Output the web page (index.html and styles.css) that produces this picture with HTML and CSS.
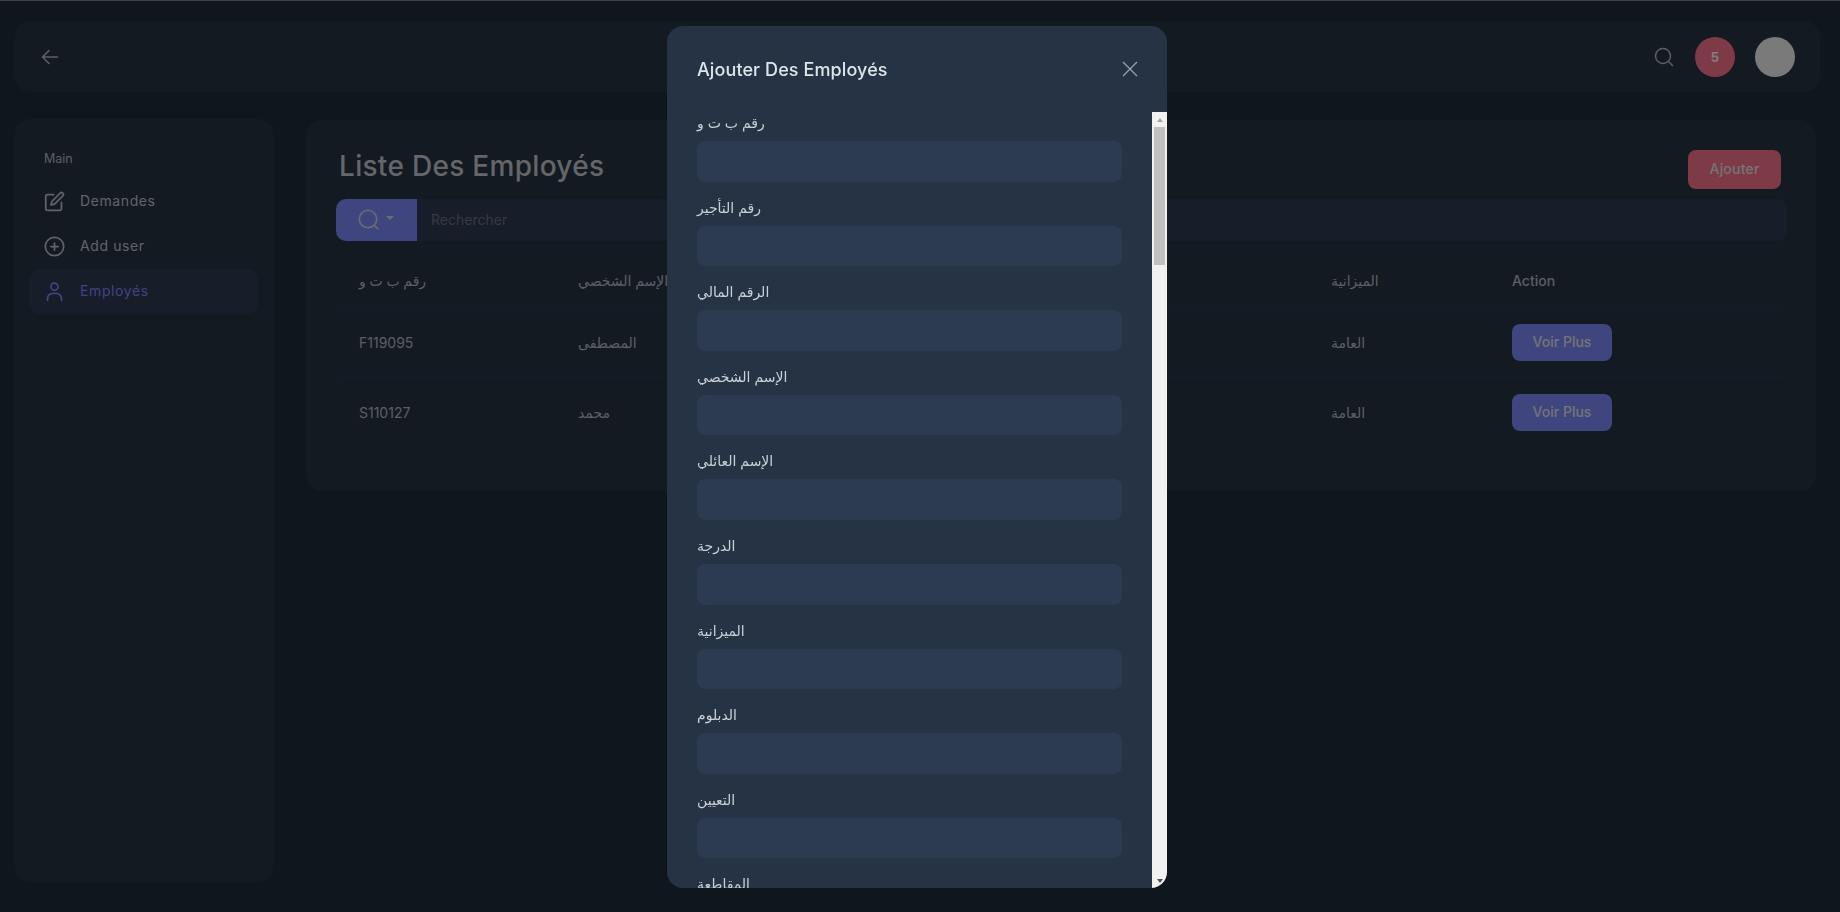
FILE: index.html
```html
<!DOCTYPE html>
<html lang="fr">
  <head>
    <meta charset="UTF-8" />
    <meta name="viewport" content="width=device-width, initial-scale=1.0" />
    <title>Liste Des Employés</title>
    <link rel="stylesheet" href="styles.css">
  </head>

  <body>
    <div class="page">
      <header class="topbar">
        <a class="back" href="#">
          <svg width="18" height="16" viewBox="0 0 18 16" fill="none" stroke="currentColor" stroke-width="1.6" stroke-linecap="round" stroke-linejoin="round"><path d="M16.500 8H1.500M8 1.500 1.500 8 8 14.500"/></svg>
        </a>
        <div class="topbar-right">
          <svg class="top-search" width="20" height="20" viewBox="0 0 20 20" fill="none" stroke="currentColor" stroke-width="1.5" stroke-linecap="round"><circle cx="9" cy="9" r="7.500"/><path d="M15 15l3.500 3.500"/></svg>
          <span class="badge">5</span>
          <span class="avatar"></span>
        </div>
      </header>

      <div class="content">
        <aside class="sidebar">
          <div class="side-title">Main</div>
          <a class="side-item" href="#">
            <svg width="21" height="21" viewBox="0 0 24 24" fill="none" stroke="currentColor" stroke-width="2" stroke-linecap="round" stroke-linejoin="round"><path d="M11 4H4a2 2 0 0 0-2 2v14a2 2 0 0 0 2 2h14a2 2 0 0 0 2-2v-7"/><path d="M18.500 2.500a2.121 2.121 0 0 1 3 3L12 15l-4 1 1-4 9.500-9.500z"/></svg>
            <span>Demandes</span>
          </a>
          <a class="side-item" href="#">
            <svg width="21" height="21" viewBox="0 0 24 24" fill="none" stroke="currentColor" stroke-width="2" stroke-linecap="round" stroke-linejoin="round"><circle cx="12" cy="12" r="10.500"/><path d="M12 8v8M8 12h8"/></svg>
            <span>Add user</span>
          </a>
          <a class="side-item active" href="#">
            <svg width="21" height="21" viewBox="0 0 24 24" fill="none" stroke="currentColor" stroke-width="2" stroke-linecap="round" stroke-linejoin="round"><circle cx="12" cy="6.500" r="4"/><path d="M4 22v-2a6 6 0 0 1 6-6h4a6 6 0 0 1 6 6v2"/></svg>
            <span>Employés</span>
          </a>
        </aside>

        <main class="panel">
          <div class="panel-head">
            <h1>Liste Des Employés</h1>
            <button class="btn btn-red" type="button">Ajouter</button>
          </div>

          <div class="search-row">
            <button class="search-btn" type="button">
              <svg width="24" height="24" viewBox="0 0 24 24" fill="none" stroke="currentColor" stroke-width="1.6" stroke-linecap="round"><circle cx="11" cy="11" r="8.700"/><path d="M17.500 17.500l3.500 3.500"/></svg>
              <span class="caret"></span>
            </button>
            <input type="text" placeholder="Rechercher" />
          </div>

          <table class="employees">
            <thead>
              <tr>
                <th>رقم ب ت و</th>
                <th>الإسم الشخصي</th>
                <th>الإسم العائلي</th>
                <th>الدرجة</th>
                <th>الميزانية</th>
                <th>Action</th>
              </tr>
            </thead>
            <tbody>
              <tr>
                <td>F119095</td>
                <td>المصطفى</td>
                <td></td>
                <td></td>
                <td>العامة</td>
                <td><button class="btn btn-blue" type="button">Voir Plus</button></td>
              </tr>
              <tr>
                <td>S110127</td>
                <td>محمد</td>
                <td></td>
                <td></td>
                <td>العامة</td>
                <td><button class="btn btn-blue" type="button">Voir Plus</button></td>
              </tr>
            </tbody>
          </table>
        </main>
      </div>
    </div>

    <div class="backdrop"></div>

    <div class="modal">
      <div class="modal-head">
        <h2>Ajouter Des Employés</h2>
        <svg class="close" width="16" height="16" viewBox="0 0 16 16" fill="none" stroke="currentColor" stroke-width="1.3"><path d="M1 1l14 14M15 1 1 15"/></svg>
      </div>
      <div class="modal-body">
        <form class="modal-form">
          <label>رقم ب ت و</label>
          <input type="text" />
          <label>رقم التأجير</label>
          <input type="text" />
          <label>الرقم المالي</label>
          <input type="text" />
          <label>الإسم الشخصي</label>
          <input type="text" />
          <label>الإسم العائلي</label>
          <input type="text" />
          <label>الدرجة</label>
          <input type="text" />
          <label>الميزانية</label>
          <input type="text" />
          <label>الدبلوم</label>
          <input type="text" />
          <label>التعيين</label>
          <input type="text" />
          <label>المقاطعة</label>
          <input type="text" />
        </form>
        <!-- the browser hides real scrollbars here, so this one is drawn -->
        <div class="scrollbar">
          <div class="scroll-btn"><span class="arrow-up"></span></div>
          <div class="scroll-track"><div class="scroll-thumb"></div></div>
          <div class="scroll-btn"><span class="arrow-down"></span></div>
        </div>
      </div>
    </div>
  </body>
</html>
```

FILE: styles.css
```css
* {
  box-sizing: border-box;
}

body {
  margin: 0;
  height: 912px;
  overflow: hidden;
  border-top: 1px solid #7a8188;
  background-color: #202d3a;
  color: #fff;
  font-family: Inter, "DejaVu Sans", sans-serif;
  font-size: 14px;
}

a {
  color: inherit;
  text-decoration: none;
}

.page {
  padding: 20px 20px 0 14px;
}

/* top bar */
.topbar {
  height: 71px;
  display: flex;
  align-items: center;
  justify-content: space-between;
  padding: 0 25px 0 27px;
  background-color: #273445;
  border-radius: 16px;
}

.back {
  display: flex;
  color: #b9bec6;
}

.topbar-right {
  display: flex;
  align-items: center;
}

.top-search {
  color: #b9bec6;
  margin-right: 21px;
}

.badge {
  width: 40px;
  height: 40px;
  margin-right: 20px;
  border-radius: 50%;
  background-color: #fc748e;
  display: flex;
  align-items: center;
  justify-content: center;
  font-weight: 700;
  font-size: 13px;
}

.avatar {
  width: 40px;
  height: 40px;
  border-radius: 50%;
  background-color: #f4f4f4;
}

.content {
  display: flex;
  align-items: flex-start;
  gap: 32px;
  margin-top: 27px;
  padding-right: 4px;
}

/* sidebar */
.sidebar {
  width: 260px;
  flex-shrink: 0;
  height: 763px;
  padding: 30px 16px 0 15px;
  background-color: #273445;
  border-radius: 16px;
}

.side-title {
  padding-left: 15px;
  margin-bottom: 10px;
  line-height: 20px;
  font-size: 12.500px;
  color: #b9bec6;
}

.side-item {
  height: 45px;
  display: flex;
  align-items: center;
  gap: 15px;
  padding-left: 15px;
  border-radius: 10px;
  color: #c3c7cd;
  font-size: 14px;
  letter-spacing: 0.6px;
}

.side-item span {
  padding-bottom: 2px;
}

.side-item.active {
  background-color: #2e3a52;
  color: #7c8aff;
}

/* main panel */
.panel {
  flex: 1;
  margin-top: 1px;
  height: 371px;
  padding: 30px 29px 0 30px;
  background-color: #273445;
  border-radius: 16px;
}

.panel-head {
  display: flex;
  align-items: flex-start;
  justify-content: space-between;
  padding: 0 6px 0 3px;
  margin-bottom: 10px;
}

h1 {
  margin: 0;
  font-size: 28px;
  line-height: 32px;
  font-weight: 500;
  letter-spacing: 0.3px;
  color: #c8ccd2;
}

.btn {
  padding: 0 0 2px;
  border: 0;
  border-radius: 8px;
  color: #e8e8ee;
  font-family: inherit;
  font-size: 14px;
  font-weight: 500;
}

.btn-red {
  width: 93px;
  height: 39px;
  background-color: #fc748e;
  letter-spacing: 0.2px;
}

.btn-blue {
  width: 100px;
  height: 37px;
  background-color: #7c8aff;
}

.search-row {
  display: flex;
  height: 42px;
  border-radius: 10px;
  overflow: hidden;
  background-color: #2e3a52;
}

.search-btn {
  width: 81px;
  display: flex;
  align-items: center;
  gap: 5px;
  padding: 0 0 0 21px;
  border: 0;
  background-color: #7c8aff;
  color: #d6d8e0;
}

.caret {
  width: 0;
  height: 0;
  margin-top: -5px;
  border-left: 4px solid transparent;
  border-right: 4px solid transparent;
  border-top: 4px solid #d6d8e0;
}

.search-row input {
  flex: 1;
  padding: 0 14px 2px;
  border: 0;
  background: transparent;
  font-family: inherit;
  font-size: 14px;
}

.search-row input::placeholder {
  color: #6c7380;
}

/* table */
.employees {
  width: 1445px;
  margin: 14px 0 0 2px;
  table-layout: fixed;
  border-collapse: collapse;
  font-size: 14px;
  color: #b9bec6;
}

.employees th,
.employees td {
  padding: 0 0 0 21px;
  text-align: left;
}

.employees th {
  height: 52px;
  font-weight: 500;
  border-bottom: 1px solid #2e394d;
}

.employees td {
  height: 70px;
}

.employees tbody tr:first-child td {
  border-bottom: 1px solid #2e394d;
}

.employees th:nth-child(1),
.employees th:nth-child(2) {
  width: 219px;
}

.employees th:nth-child(3),
.employees th:nth-child(4) {
  width: 267px;
}

.employees th:nth-child(5) {
  width: 181px;
}

/* modal over the page */
.backdrop {
  position: fixed;
  inset: 0;
  background-color: rgba(0, 0, 0, 0.5);
}

.modal {
  position: fixed;
  top: 26px;
  left: 667px;
  width: 500px;
  height: 862px;
  display: flex;
  flex-direction: column;
  background-color: #253345;
  border-radius: 16px;
  overflow: hidden;
}

.modal-head {
  height: 86px;
  flex-shrink: 0;
  display: flex;
  align-items: center;
  justify-content: space-between;
  padding: 0 29px 0 30px;
}

h2 {
  margin: 0;
  font-size: 18px;
  font-weight: 500;
  letter-spacing: 0.1px;
  color: #dfe5ea;
}

.close {
  color: #9aa3ad;
}

.modal-body {
  flex: 1;
  min-height: 0;
  display: flex;
}

.modal-form {
  flex: 1;
  overflow: hidden;
  padding: 0 30px;
}

.modal-form label {
  display: block;
  height: 21px;
  line-height: 21px;
  margin-bottom: 8px;
  font-size: 14px;
  color: #cad1d7;
}

.modal-form input {
  display: block;
  width: 100%;
  height: 40.600px;
  margin-bottom: 15px;
  border: 0;
  border-radius: 8px;
  background-color: #2c3b52;
}

/* drawn scrollbar */
.scrollbar {
  width: 15px;
  display: flex;
  flex-direction: column;
  background-color: #f1f1f1;
}

.scroll-btn {
  height: 15px;
  display: flex;
  align-items: center;
  justify-content: center;
}

.arrow-up,
.arrow-down {
  width: 0;
  height: 0;
  border-left: 3.500px solid transparent;
  border-right: 3.500px solid transparent;
}

.arrow-up {
  border-bottom: 4px solid #a3a3a3;
}

.arrow-down {
  border-top: 4px solid #505050;
}

.scroll-track {
  flex: 1;
  padding: 0 2px;
}

.scroll-thumb {
  height: 138px;
  background-color: #c1c1c1;
}
```
